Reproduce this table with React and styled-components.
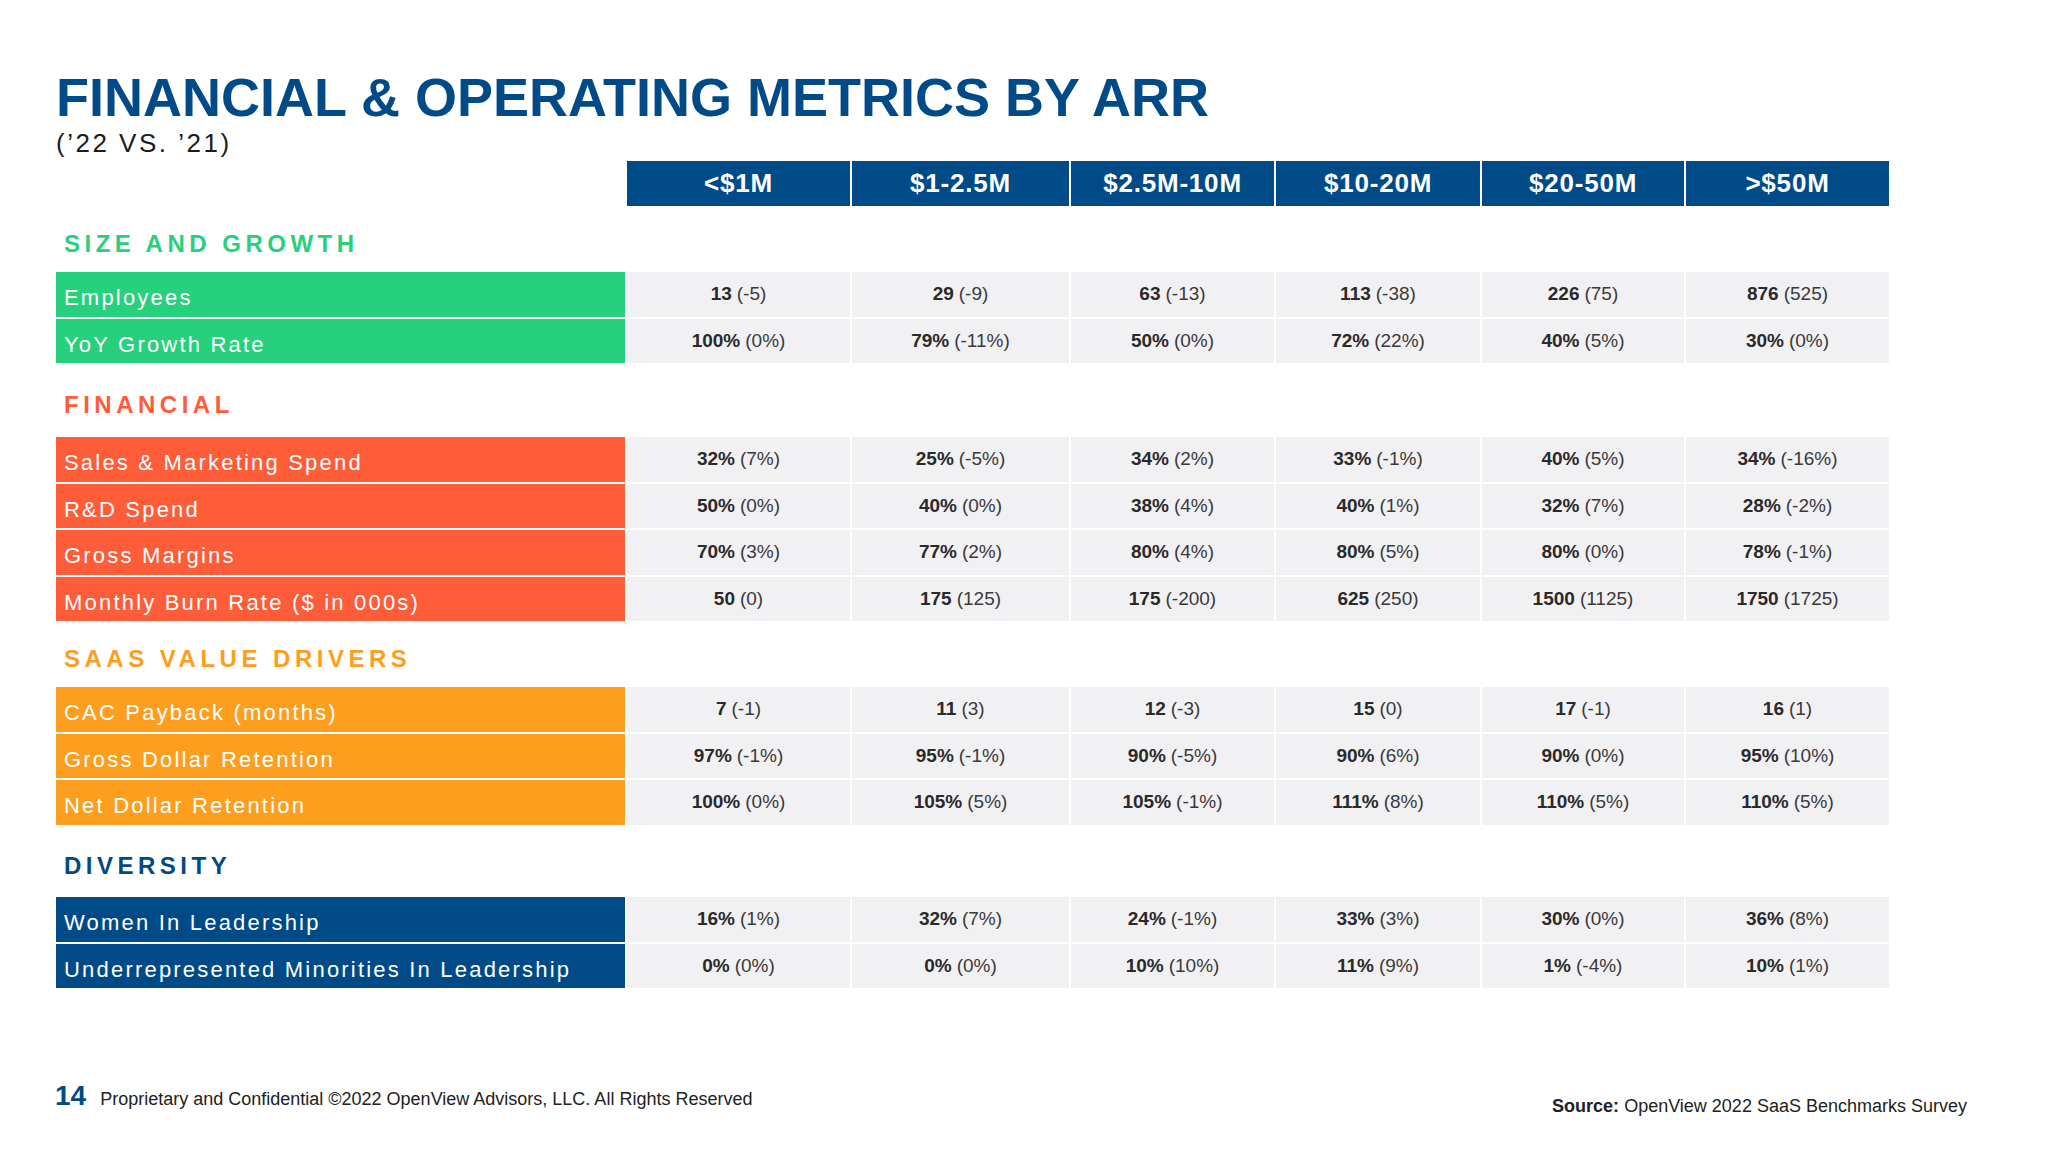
import React from "react";
import styled, { createGlobalStyle } from "styled-components";

const navy = "#004b87";
const green = "#26d07c";
const red = "#ff5c39";
const orange = "#fd9e1f";
const cols = "569px 223px 217px 203px 204px 202px 203px";

const GlobalStyle = createGlobalStyle`
  html, body {
    margin: 0;
    background: #fff;
  }
  body {
    font-family: "Liberation Sans", Arial, sans-serif;
  }
`;

const Page = styled.div`
  width: 2048px;
  height: 1152px;
  box-sizing: border-box;
  padding: 70px 0 0 56px;
  display: flex;
  flex-direction: column;
  overflow: hidden;
`;
const Title = styled.h1`
  margin: 0;
  font-size: 54px;
  line-height: 54px;
  font-weight: 700;
  color: ${navy};
`;
const Subtitle = styled.div`
  margin-top: 4px;
  font-size: 26px;
  line-height: 30px;
  letter-spacing: 2.5px;
  color: #1c1c1c;
`;
const Grid = styled.div`
  display: grid;
  grid-template-columns: ${cols};
  column-gap: 2px;
`;
const HeadRow = styled(Grid)`
  margin-top: 3px;
  height: 45px;
`;
const HeadCell = styled.div`
  background: ${navy};
  color: #fff;
  font-weight: 700;
  font-size: 26px;
  letter-spacing: 0.8px;
  display: flex;
  align-items: center;
  justify-content: center;
`;
const Section = styled.section`
  margin-top: ${(p) => p.$top}px;
`;
const Heading = styled.h2`
  margin: 0 0 ${(p) => p.$bottom}px;
  padding-left: 8px;
  font-size: 24px;
  line-height: 24px;
  font-weight: 700;
  letter-spacing: 4.5px;
  color: ${(p) => p.$color};
`;
const Row = styled(Grid)`
  height: 44.5px;
  & + & {
    margin-top: 2px;
  }
`;
const Label = styled.div`
  background: ${(p) => p.$color};
  color: #fff;
  font-size: 22px;
  letter-spacing: 2.2px;
  padding: 8px 0 0 8px;
  display: flex;
  align-items: center;
  white-space: nowrap;
`;
const Cell = styled.div`
  background: #f1f0f3;
  display: flex;
  align-items: center;
  justify-content: center;
  font-size: 19px;
  color: #3a3a3a;
  b {
    font-weight: 700;
    color: #2a2a2a;
    margin-right: 5px;
  }
`;
const Footer = styled.footer`
  margin-top: 91px;
  padding-right: 81px;
  display: flex;
  justify-content: space-between;
  align-items: flex-start;
`;
const Left = styled.div`
  display: flex;
  align-items: baseline;
  gap: 14px;
  margin: 3px 0 0 -1px;
`;
const PageNum = styled.span`
  font-size: 28px;
  line-height: 28px;
  font-weight: 700;
  color: ${navy};
`;
const Note = styled.span`
  font-size: 18px;
  color: #222;
`;
const Source = styled.div`
  margin-top: 17px;
  font-size: 18px;
  line-height: 20px;
  color: #222;
  b {
    font-weight: 700;
  }
`;

const heads = ["<$1M", "$1-2.5M", "$2.5M-10M", "$10-20M", "$20-50M", ">$50M"];

const sections = [
  {
    title: "SIZE AND GROWTH",
    color: green,
    top: 26,
    bottom: 16,
    rows: [
      ["Employees", ["13 (-5)", "29 (-9)", "63 (-13)", "113 (-38)", "226 (75)", "876 (525)"]],
      ["YoY Growth Rate", ["100% (0%)", "79% (-11%)", "50% (0%)", "72% (22%)", "40% (5%)", "30% (0%)"]]
    ]
  },
  {
    title: "FINANCIAL",
    color: red,
    top: 30,
    bottom: 20,
    rows: [
      ["Sales & Marketing Spend", ["32% (7%)", "25% (-5%)", "34% (2%)", "33% (-1%)", "40% (5%)", "34% (-16%)"]],
      ["R&D Spend", ["50% (0%)", "40% (0%)", "38% (4%)", "40% (1%)", "32% (7%)", "28% (-2%)"]],
      ["Gross Margins", ["70% (3%)", "77% (2%)", "80% (4%)", "80% (5%)", "80% (0%)", "78% (-1%)"]],
      ["Monthly Burn Rate ($ in 000s)", ["50 (0)", "175 (125)", "175 (-200)", "625 (250)", "1500 (1125)", "1750 (1725)"]]
    ]
  },
  {
    title: "SAAS VALUE DRIVERS",
    color: orange,
    top: 26,
    bottom: 16,
    rows: [
      ["CAC Payback (months)", ["7 (-1)", "11 (3)", "12 (-3)", "15 (0)", "17 (-1)", "16 (1)"]],
      ["Gross Dollar Retention", ["97% (-1%)", "95% (-1%)", "90% (-5%)", "90% (6%)", "90% (0%)", "95% (10%)"]],
      ["Net Dollar Retention", ["100% (0%)", "105% (5%)", "105% (-1%)", "111% (8%)", "110% (5%)", "110% (5%)"]]
    ]
  },
  {
    title: "DIVERSITY",
    color: navy,
    top: 29.5,
    bottom: 19,
    rows: [
      ["Women In Leadership", ["16% (1%)", "32% (7%)", "24% (-1%)", "33% (3%)", "30% (0%)", "36% (8%)"]],
      ["Underrepresented Minorities In Leadership", ["0% (0%)", "0% (0%)", "10% (10%)", "11% (9%)", "1% (-4%)", "10% (1%)"]]
    ]
  }
];

const Value = ({ text }) => {
  const [main, change] = text.split(" ");
  return (
    <Cell>
      <b>{main}</b>
      {change}
    </Cell>
  );
};

export default function App() {
  return (
    <Page>
      <GlobalStyle />
      <Title>FINANCIAL &amp; OPERATING METRICS BY ARR</Title>
      <Subtitle>(’22 VS. ’21)</Subtitle>
      <HeadRow>
        <div />
        {heads.map((h) => (
          <HeadCell key={h}>{h}</HeadCell>
        ))}
      </HeadRow>
      {sections.map((s) => (
        <Section key={s.title} $top={s.top}>
          <Heading $color={s.color} $bottom={s.bottom}>
            {s.title}
          </Heading>
          {s.rows.map(([label, vals]) => (
            <Row key={label}>
              <Label $color={s.color}>{label}</Label>
              {vals.map((v, i) => (
                <Value key={i} text={v} />
              ))}
            </Row>
          ))}
        </Section>
      ))}
      <Footer>
        <Left>
          <PageNum>14</PageNum>
          <Note>Proprietary and Confidential ©2022 OpenView Advisors, LLC. All Rights Reserved</Note>
        </Left>
        <Source>
          <b>Source:</b> OpenView 2022 SaaS Benchmarks Survey
        </Source>
      </Footer>
    </Page>
  );
}
